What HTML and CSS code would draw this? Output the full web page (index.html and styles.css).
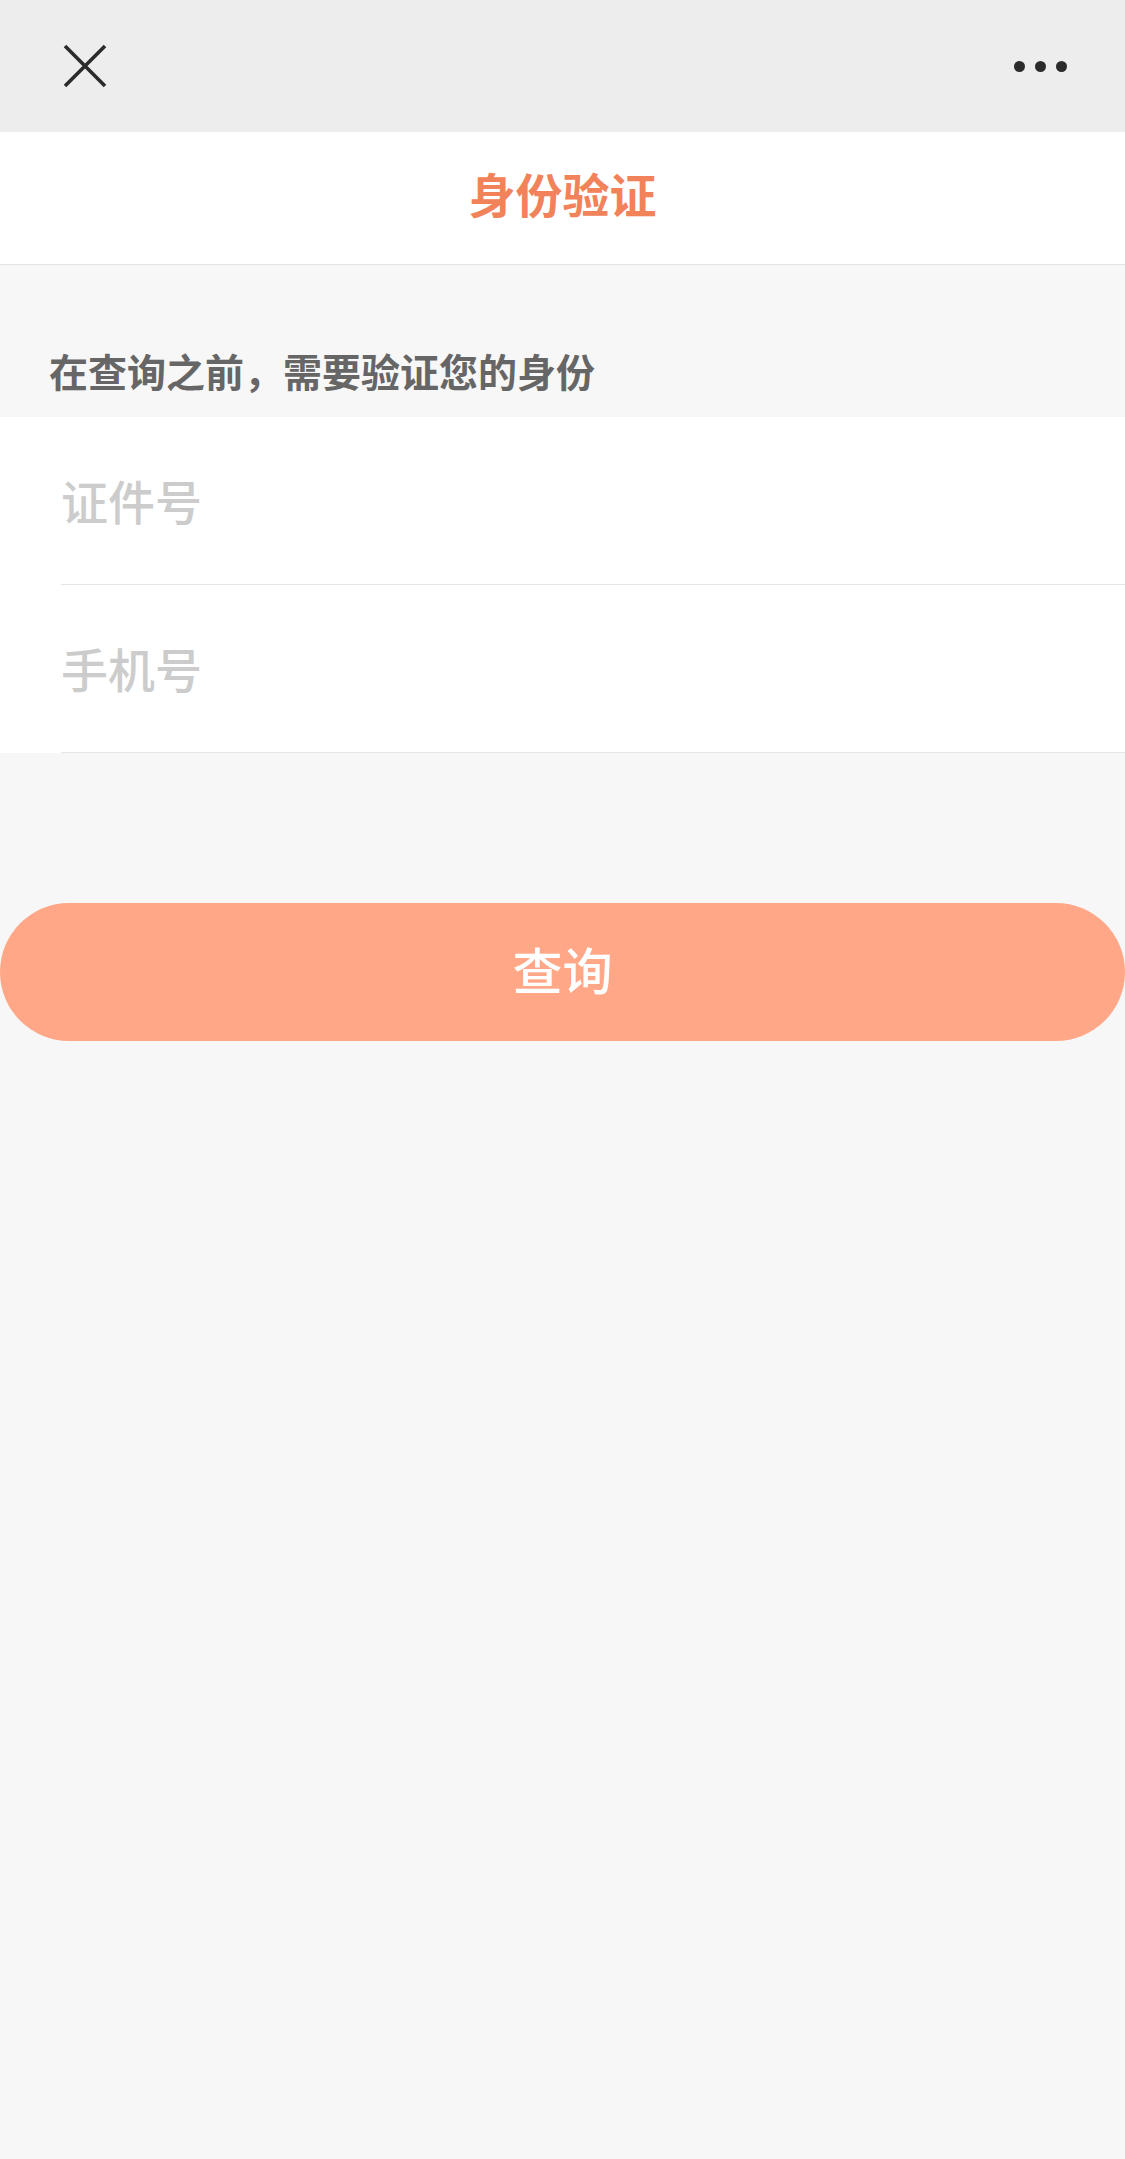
FILE: index.html
```html
<!DOCTYPE html>
<html lang="zh-CN">
<head>
<meta charset="utf-8">
<title>身份验证</title>
<link rel="stylesheet" href="styles.css">
</head>
<body>
<div class="topbar">
  <svg class="close" width="44" height="44" viewBox="0 0 44 44"><path d="M2 2 L42 42 M42 2 L2 42" stroke="#2b2b2b" stroke-width="3.6" fill="none"/></svg>
  <div class="more"><span></span><span></span><span></span></div>
</div>
<div class="titlebar">身份验证</div>
<div class="intro">在查询之前，需要验证您的身份</div>
<div class="form">
  <div class="row"><input class="field" type="text" placeholder="证件号"></div>
  <div class="row"><input class="field" type="text" placeholder="手机号"></div>
</div>
<button class="submit">查询</button>
</body>
</html>
```
FILE: styles.css
```css
html, body {
  margin: 0;
  padding: 0;
  background: #f7f7f7;
  font-family: "Noto Sans CJK SC", "Noto Sans", sans-serif;
}
.topbar {
  height: 132px;
  background: #ededed;
  display: flex;
  align-items: center;
  justify-content: space-between;
  padding: 0 58px 0 63px;
}
.close {
  display: block;
}
.more {
  display: flex;
  gap: 10px;
}
.more span {
  width: 11px;
  height: 11px;
  border-radius: 50%;
  background: #2b2b2b;
}
.titlebar {
  height: 133px;
  box-sizing: border-box;
  padding-bottom: 12px;
  background: #fff;
  border-bottom: 1px solid #e3e3e3;
  display: flex;
  align-items: center;
  justify-content: center;
  font-size: 47px;
  font-weight: 700;
  color: #f2825a;
}
.intro {
  height: 152px;
  box-sizing: border-box;
  padding: 77px 0 0 49px;
  font-size: 39px;
  line-height: 56px;
  font-weight: 700;
  color: #666;
}
.form {
  background: #fff;
  padding-left: 61px;
}
.row {
  height: 167px;
  border-bottom: 1px solid #e5e5e5;
  display: flex;
  align-items: center;
}
.field {
  border: none;
  outline: none;
  background: transparent;
  padding: 0 0 2px;
  margin: 0;
  width: 100%;
  font-family: "Noto Sans CJK SC", "Noto Sans", sans-serif;
  font-size: 47px;
  font-weight: 500;
  color: #333;
}
.field::placeholder {
  color: #cccccc;
}
.submit {
  display: block;
  width: 100%;
  height: 138px;
  margin: 150px 0 0;
  border: none;
  border-radius: 69px;
  background: #ffa787;
  color: #fff;
  font-family: "Noto Sans CJK SC", "Noto Sans", sans-serif;
  font-size: 50px;
  font-weight: 500;
  padding: 0 0 8px;
}
```
